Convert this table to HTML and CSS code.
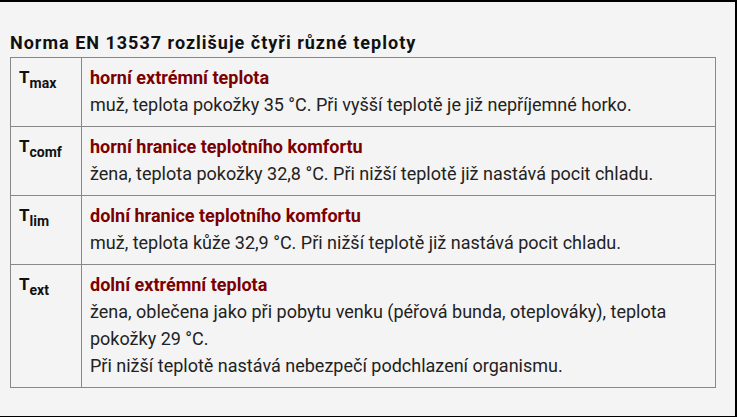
FILE: index.html
```html
<!DOCTYPE html>
<html lang="cs">
<head>
<meta charset="utf-8">
<link rel="stylesheet" href="styles.css">
</head>
<body>
<div class="frame">
  <div class="page">
    <h3 class="title">Norma EN 13537 rozlišuje čtyři různé teploty</h3>
    <table class="norm">
      <tr>
        <th>T<sub>max</sub></th>
        <td><span class="name">horní extrémní teplota</span><br>muž, teplota pokožky 35 °C. Při vyšší teplotě je již nepříjemné horko.</td>
      </tr>
      <tr>
        <th>T<sub>comf</sub></th>
        <td><span class="name">horní hranice teplotního komfortu</span><br>žena, teplota pokožky 32,8 °C. Při nižší teplotě již nastává pocit chladu.</td>
      </tr>
      <tr>
        <th>T<sub>lim</sub></th>
        <td><span class="name">dolní hranice teplotního komfortu</span><br>muž, teplota kůže 32,9 °C. Při nižší teplotě již nastává pocit chladu.</td>
      </tr>
      <tr>
        <th>T<sub>ext</sub></th>
        <td><span class="name">dolní extrémní teplota</span><br>žena, oblečena jako při pobytu venku (péřová bunda, oteplováky), teplota pokožky 29 °C.<br>Při nižší teplotě nastává nebezpečí podchlazení organismu.</td>
      </tr>
    </table>
  </div>
</div>
</body>
</html>
```

FILE: styles.css
```css
html, body {
  margin: 0;
  padding: 0;
  background: #000;
}
.frame {
  width: 737px;
  height: 417px;
  background: #000;
  padding-top: 2px;
  box-sizing: border-box;
}
.page {
  width: 735px;
  height: 414px;
  background: #f4f4f4;
  padding: 0 20px 0 10px;
  box-sizing: border-box;
  font-family: Roboto, "Liberation Sans", sans-serif;
  color: #222;
  overflow: hidden;
}
.title {
  margin: 0;
  padding-top: 30px;
  font-size: 18px;
  line-height: 22px;
  letter-spacing: 1px;
  font-weight: bold;
  color: #111;
  height: 55px;
  box-sizing: border-box;
  white-space: nowrap;
}
.norm {
  border-collapse: collapse;
  width: 706px;
  font-size: 18px;
  line-height: 27px;
}
.norm th, .norm td {
  border: 1px solid #888;
  vertical-align: top;
  text-align: left;
  padding: 6px 8px 8px 8px;
}
.norm th {
  width: 54px;
  font-size: 17px;
  font-weight: bold;
  color: #111;
}
.norm th sub {
  font-size: 14px;
  line-height: 0;
  vertical-align: -5px;
}
.norm td {
  color: #222;
}
.name {
  color: #7b0000;
  font-weight: bold;
}
```
